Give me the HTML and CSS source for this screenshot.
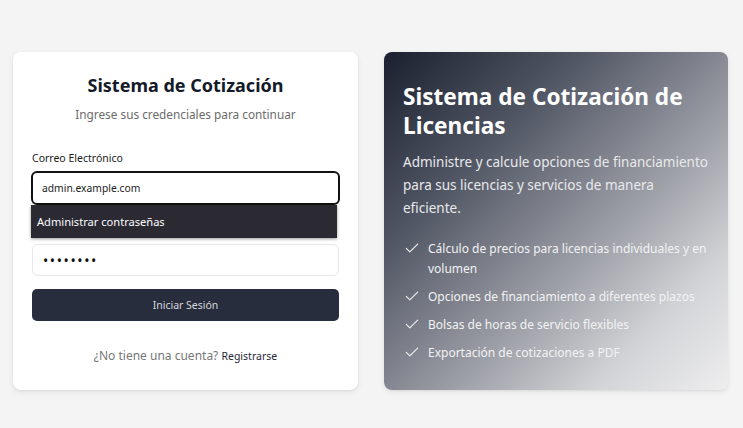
FILE: index.html
```html
<!DOCTYPE html>
<html lang="es">
<head>
<meta charset="utf-8">
<title>Sistema de Cotización</title>
<link rel="stylesheet" href="styles.css">
</head>
<body>
<main class="layout">
  <section class="card login">
    <h1 class="login-title">Sistema de Cotización</h1>
    <p class="login-sub">Ingrese sus credenciales para continuar</p>
    <form class="form">
      <label class="label">Correo Electrónico</label>
      <div class="field-wrap">
        <div class="input input-focus">admin.example.com</div>
        <div class="autofill">Administrar contraseñas</div>
      </div>
      <div class="input input-pass">••••••••</div>
      <div class="btn">Iniciar Sesión</div>
    </form>
    <p class="footer">¿No tiene una cuenta? <span class="link">Registrarse</span></p>
  </section>
  <section class="card hero">
    <h2 class="hero-title">Sistema de Cotización de Licencias</h2>
    <p class="hero-text">Administre y calcule opciones de financiamiento para sus licencias y servicios de manera eficiente.</p>
    <ul class="features">
      <li class="feature"><svg class="check" viewBox="0 0 16 16"><path d="M1.5 8.5l4 4 9-9" fill="none" stroke="currentColor" stroke-width="1.4" stroke-linecap="round" stroke-linejoin="round"/></svg><span>Cálculo de precios para licencias individuales y en volumen</span></li>
      <li class="feature"><svg class="check" viewBox="0 0 16 16"><path d="M1.5 8.5l4 4 9-9" fill="none" stroke="currentColor" stroke-width="1.4" stroke-linecap="round" stroke-linejoin="round"/></svg><span>Opciones de financiamiento a diferentes plazos</span></li>
      <li class="feature"><svg class="check" viewBox="0 0 16 16"><path d="M1.5 8.5l4 4 9-9" fill="none" stroke="currentColor" stroke-width="1.4" stroke-linecap="round" stroke-linejoin="round"/></svg><span>Bolsas de horas de servicio flexibles</span></li>
      <li class="feature"><svg class="check" viewBox="0 0 16 16"><path d="M1.5 8.5l4 4 9-9" fill="none" stroke="currentColor" stroke-width="1.4" stroke-linecap="round" stroke-linejoin="round"/></svg><span>Exportación de cotizaciones a PDF</span></li>
    </ul>
  </section>
</main>
</body>
</html>
```
FILE: styles.css
```css
* { box-sizing: border-box; }
html, body { margin: 0; padding: 0; }
body {
  background: #f4f4f4;
  font-family: "Noto Sans", "Open Sans", sans-serif;
  color: #111827;
  width: 743px;
  height: 428px;
  overflow: hidden;
}
.layout {
  display: grid;
  grid-template-columns: 345px 344px;
  gap: 26px;
  padding: 52px 0 0 13px;
}
.card {
  border-radius: 8px;
  height: 338px;
  box-shadow: 0 2px 6px rgba(0,0,0,0.08), 0 1px 2px rgba(0,0,0,0.05);
}
.login {
  background: #fff;
  padding: 21px 19px 0;
  display: flex;
  flex-direction: column;
}
.login-title {
  margin: 0;
  text-align: center;
  font-size: 18px;
  line-height: 24px;
  font-weight: 700;
  color: #141a29;
}
.login-sub {
  margin: 8px 0 0;
  text-align: center;
  font-size: 11.8px;
  line-height: 18px;
  color: #6b6b6b;
}
.form {
  display: flex;
  flex-direction: column;
  margin-top: 28px;
}
.label {
  font-size: 10.5px;
  line-height: 14px;
  color: #1a1a1a;
  margin-bottom: 6px;
}
.field-wrap {
  position: relative;
}
.input {
  height: 32px;
  border: 1px solid #e5e7eb;
  border-radius: 6px;
  padding: 0 10px;
  display: flex;
  align-items: center;
  font-size: 10.3px;
  color: #222;
}
.input-focus {
  height: 34px;
  margin: 0 -1px;
  border: 2px solid #111;
  padding: 0 9px;
}
.autofill {
  position: absolute;
  left: -1px;
  top: 34px;
  width: 306px;
  height: 33px;
  background: #2b2a33;
  color: #fbfbfe;
  font-size: 11.1px;
  padding: 0 6px;
  display: flex;
  align-items: center;
  box-shadow: 0 1px 3px rgba(0,0,0,0.4);
  z-index: 2;
}
.input-pass {
  margin-top: 39px;
  font-size: 14px;
  letter-spacing: 1.6px;
  color: #111;
}
.btn {
  margin-top: 13px;
  height: 32px;
  border-radius: 5px;
  background: #272d3c;
  color: #d6d8dd;
  font-size: 10.5px;
  display: flex;
  align-items: center;
  justify-content: center;
}
.footer {
  margin: 26px 0 0;
  text-align: center;
  font-size: 12px;
  color: #777;
}
.link {
  font-size: 10.5px;
  color: #1f2937;
}
.hero {
  background: linear-gradient(135deg, #1b2030 0%, #4f5462 28%, #9ea0a8 60%, #d2d3d6 80%, #eeeeef 100%);
  padding: 30px 19px 0;
  color: #fff;
}
.hero-title {
  margin: 0;
  font-size: 22.6px;
  line-height: 29px;
  font-weight: 700;
}
.hero-text {
  margin: 11px 0 0;
  font-size: 13.5px;
  line-height: 23px;
  color: #e8e9ec;
}
.features {
  list-style: none;
  margin: 19px 0 0;
  padding: 0;
  display: flex;
  flex-direction: column;
  gap: 8px;
}
.feature {
  display: flex;
  align-items: flex-start;
  gap: 9px;
  font-size: 12px;
  line-height: 20px;
  color: #f2f2f4;
}
.check {
  width: 14px;
  height: 14px;
  flex: none;
  margin: 2px 0 0 2px;
  color: #ececef;
}
```
